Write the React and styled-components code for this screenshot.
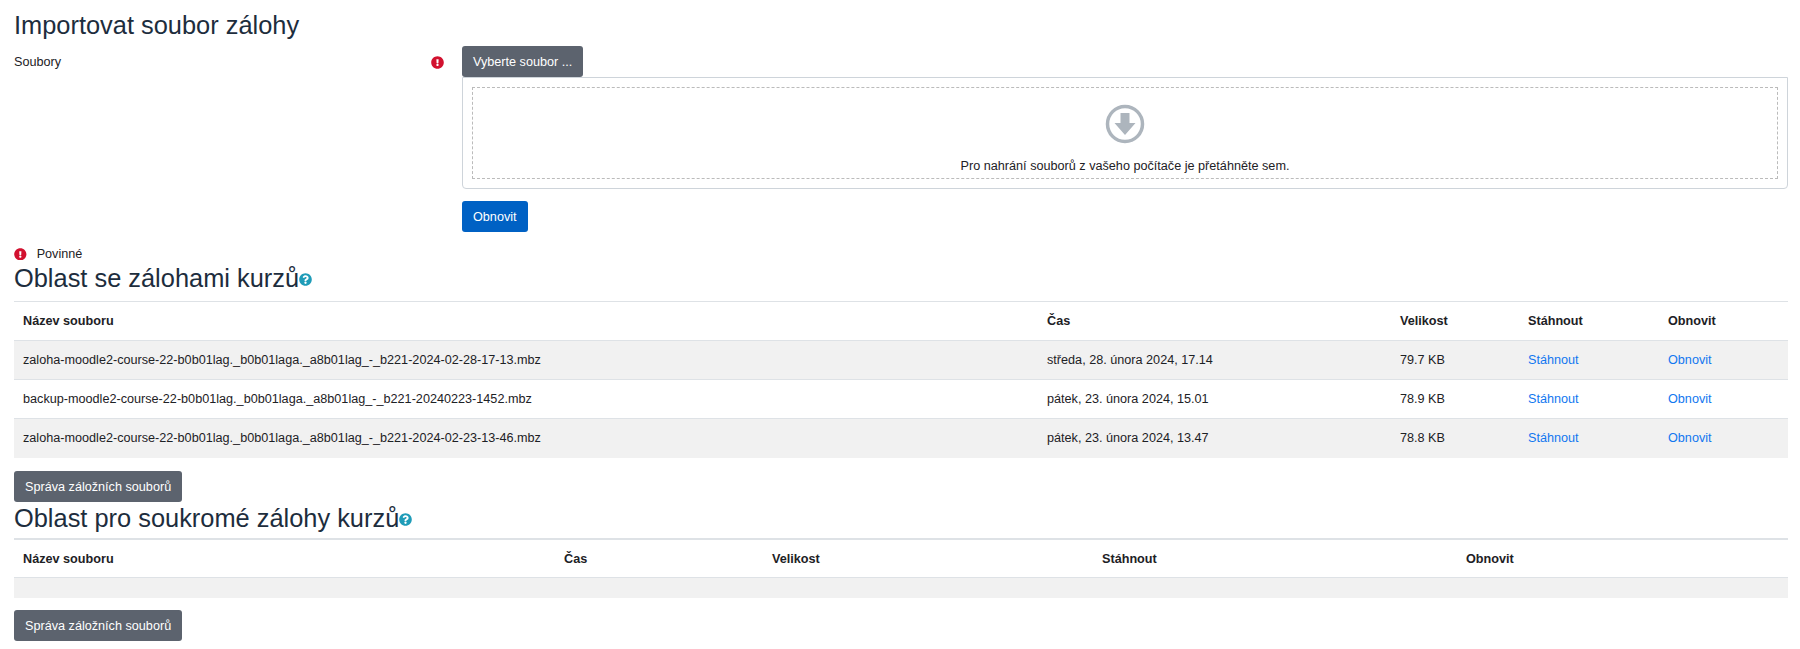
import React from "react";
import styled, { createGlobalStyle } from "styled-components";
import { FaExclamationCircle, FaQuestionCircle } from "react-icons/fa";

const GlobalStyle = createGlobalStyle`
  body {
    margin: 0;
    background: #fff;
    color: #1d2125;
    font-family: "Liberation Sans", Arial, sans-serif;
    font-size: 12.65px;
  }
`;

const Page = styled.div`
  padding: 11px 12px 0 14px;
`;

const Title = styled.h3`
  margin: 0;
  font-size: 25.4px;
  font-weight: 400;
  line-height: 28px;
  color: #1d2d3d;
`;

const SectionTitle = styled(Title)`
  display: flex;
  align-items: flex-start;
  height: ${(p) => p.$height}px;
  line-height: 32px;
`;

const FormRow = styled.div`
  display: grid;
  grid-template-columns: 417px 31px 1fr;
  margin-top: 7px;
`;

const FieldLabel = styled.label`
  padding-top: 8px;
  line-height: 16px;
`;

const Required = styled.div`
  padding-top: 10px;
  color: #d2112f;
  font-size: 13px;
  line-height: 0;
`;

const Field = styled.div`
  min-width: 0;
`;

const Button = styled.button`
  display: block;
  height: 31px;
  padding: 0 11px;
  border: 0;
  border-radius: 3px;
  background: ${(p) => (p.$primary ? "#0061c4" : "#5c636e")};
  color: #fff;
  font-family: inherit;
  font-size: 12.65px;
`;

const DropBox = styled.div`
  padding: 9px;
  border: 1px solid #ced4da;
  border-radius: 0 0 4px 4px;
`;

const DropInner = styled.div`
  height: 74px;
  padding-top: 16px;
  border: 1px dashed #bbb;
  display: flex;
  flex-direction: column;
  align-items: center;
`;

const DropIcon = styled.svg`
  width: 40px;
  height: 40px;
  display: block;
`;

const DropText = styled.div`
  margin-top: 14px;
  line-height: 16px;
`;

const SubmitWrap = styled.div`
  margin-top: 12px;
`;

const RequiredNote = styled.div`
  display: flex;
  align-items: center;
  gap: 10px;
  height: 16px;
  margin-top: 14px;
  svg {
    color: #d2112f;
  }
`;

const HelpIcon = styled(FaQuestionCircle)`
  color: #1f9cb8;
  font-size: 13px;
  margin-top: 11px;
  flex: none;
`;

const Table = styled.table`
  width: 100%;
  table-layout: fixed;
  border-collapse: collapse;
  border-top: ${(p) => p.$topBorder}px solid #dee2e6;
`;

const Col = styled.col`
  width: ${(p) => p.$w}px;
`;

const Th = styled.th`
  height: ${(p) => p.$height}px;
  padding: 0 9px;
  text-align: left;
  font-weight: 700;
  border-bottom: 1px solid #dee2e6;
`;

const Td = styled.td`
  height: 38px;
  padding: 0 9px;
  border-bottom: 1px solid #dee2e6;
  tr:last-child > & {
    border-bottom-color: #f1f1f1;
  }
`;

const Row = styled.tr`
  background: ${(p) => (p.$odd ? "#f1f1f1" : "#fff")};
`;

const EmptyCell = styled.td`
  height: 20px;
  padding: 0;
`;

const Link = styled.a`
  color: #1177f0;
  text-decoration: none;
`;

const ManageWrap = styled.div`
  margin-top: ${(p) => p.$gap}px;
`;

const columnsA = [1024, 353, 128, 140];
const columnsB = [541, 208, 330, 364];
const heads = ["Název souboru", "Čas", "Velikost", "Stáhnout", "Obnovit"];

const files = [
  ["zaloha-moodle2-course-22-b0b01lag._b0b01laga._a8b01lag_-_b221-2024-02-28-17-13.mbz", "středa, 28. února 2024, 17.14", "79.7 KB"],
  ["backup-moodle2-course-22-b0b01lag._b0b01laga._a8b01lag_-_b221-20240223-1452.mbz", "pátek, 23. února 2024, 15.01", "78.9 KB"],
  ["zaloha-moodle2-course-22-b0b01lag._b0b01laga._a8b01lag_-_b221-2024-02-23-13-46.mbz", "pátek, 23. února 2024, 13.47", "78.8 KB"],
];

const FileTable = ({ columns, topBorder, headHeight, children }) => (
  <Table $topBorder={topBorder}>
    <colgroup>
      {columns.map((w, i) => (
        <Col key={i} $w={w} />
      ))}
      <col />
    </colgroup>
    <thead>
      <tr>
        {heads.map((h) => (
          <Th key={h} $height={headHeight}>{h}</Th>
        ))}
      </tr>
    </thead>
    <tbody>{children}</tbody>
  </Table>
);

export default function App() {
  return (
    <Page>
      <GlobalStyle />
      <Title>Importovat soubor zálohy</Title>
      <FormRow>
        <FieldLabel>Soubory</FieldLabel>
        <Required>
          <FaExclamationCircle />
        </Required>
        <Field>
          <Button>Vyberte soubor ...</Button>
          <DropBox>
            <DropInner>
              <DropIcon viewBox="0 0 40 40">
                <circle cx="20" cy="20" r="17.5" fill="none" stroke="#adb5bd" strokeWidth="3.5" />
                <path d="M15.5 9h9v10h6L20 31 9.5 19h6z" fill="#adb5bd" />
              </DropIcon>
              <DropText>Pro nahrání souborů z vašeho počítače je přetáhněte sem.</DropText>
            </DropInner>
          </DropBox>
          <SubmitWrap>
            <Button $primary>Obnovit</Button>
          </SubmitWrap>
        </Field>
      </FormRow>
      <RequiredNote>
        <FaExclamationCircle />
        Povinné
      </RequiredNote>
      <SectionTitle $height={39}>
        Oblast se zálohami kurzů
        <HelpIcon />
      </SectionTitle>
      <FileTable columns={columnsA} topBorder={1} headHeight={38}>
        {files.map(([name, time, size], i) => (
          <Row key={name} $odd={i % 2 === 0}>
            <Td>{name}</Td>
            <Td>{time}</Td>
            <Td>{size}</Td>
            <Td><Link href="#">Stáhnout</Link></Td>
            <Td><Link href="#">Obnovit</Link></Td>
          </Row>
        ))}
      </FileTable>
      <ManageWrap $gap={13}>
        <Button>Správa záložních souborů</Button>
      </ManageWrap>
      <SectionTitle $height={36}>
        Oblast pro soukromé zálohy kurzů
        <HelpIcon />
      </SectionTitle>
      <FileTable columns={columnsB} topBorder={2} headHeight={37}>
        <Row $odd>
          <EmptyCell colSpan={5} />
        </Row>
      </FileTable>
      <ManageWrap $gap={12}>
        <Button>Správa záložních souborů</Button>
      </ManageWrap>
    </Page>
  );
}
